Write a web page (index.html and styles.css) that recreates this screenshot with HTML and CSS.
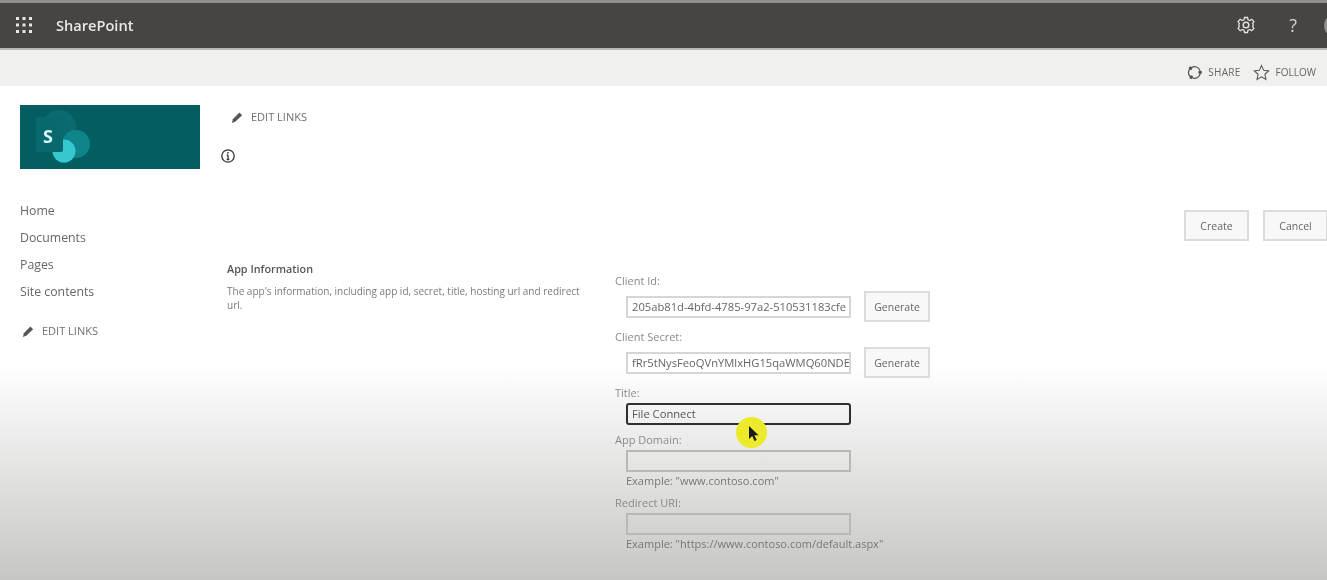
FILE: index.html
```html
<!DOCTYPE html>
<html lang="en">
<head>
<meta charset="utf-8">
<title>SharePoint</title>
<link rel="stylesheet" href="styles.css">
</head>
<body>
<div class="page">
  <header class="suitebar">
    <svg class="waffle" viewBox="0 0 16 16" width="16" height="16"><g fill="#e6e6e4"><rect x="0" y="0" width="3" height="3"/><rect x="6.500" y="0" width="3" height="3"/><rect x="13" y="0" width="3" height="3"/><rect x="0" y="6.500" width="3" height="3"/><rect x="6.500" y="6.500" width="3" height="3"/><rect x="13" y="6.500" width="3" height="3"/><rect x="0" y="13" width="3" height="3"/><rect x="6.500" y="13" width="3" height="3"/><rect x="13" y="13" width="3" height="3"/></g></svg>
    <span class="brand">SharePoint</span>
    <div class="suite-actions">
      <svg class="gear" viewBox="0 0 24 24" width="20" height="20" fill="none" stroke="#e4e4e2" stroke-width="1.700"><circle cx="12" cy="12" r="3.400"/><path d="M10 2h4l.7 3 2.300 1 2.700-1.600 2.800 2.900L20.900 10l.6 1 0 2-.6 1 1.600 2.700-2.800 2.900L17 18l-2.300 1-.7 3h-4l-.7-3L7 18l-2.700 1.600-2.800-2.900L3.100 14l-.6-1v-2l.6-1L1.500 7.300l2.800-2.900L7 6l2.300-1z" transform="translate(1.200 1.200) scale(.9)"/></svg>
      <span class="help">?</span>
    </div>
    <span class="avatar-edge"></span>
  </header>
  <div class="ribbon">
    <span class="ribbon-action">
      <svg viewBox="0 0 16 16" width="15" height="15" fill="none" stroke="#555" stroke-width="1.300"><path d="M5 2.600A6 6 0 0 1 13.800 6M14 9.500A6 6 0 0 1 6.500 14M3 12A6 6 0 0 1 2.600 5"/><circle cx="3.800" cy="3.500" r="1.300" fill="#555"/><circle cx="14" cy="7.800" r="1.300" fill="#555"/><circle cx="4.500" cy="13" r="1.300" fill="#555"/></svg>
      <span class="share-label">SHARE</span>
    </span>
    <span class="ribbon-action">
      <svg viewBox="0 0 16 16" width="17" height="17" fill="none" stroke="#555" stroke-width="1"><path d="M8 1.500l2 4.500 4.800.5-3.600 3.200 1 4.800L8 12.100l-4.200 2.400 1-4.800L1.200 6.500 6 6z"/></svg>
      FOLLOW
    </span>
  </div>
  <div class="layout">
    <aside class="sidenav">
      <div class="logo">
        <svg viewBox="0 0 64 64" width="64" height="64">
          <circle cx="21" cy="22" r="17" fill="#0a6a70"/>
          <circle cx="38" cy="39" r="14" fill="#0f8489"/>
          <circle cx="26" cy="46" r="11.500" fill="#35c9cf"/>
          <rect x="-2" y="12" width="27" height="35" rx="2" fill="#07686d"/>
          <text x="5" y="38" class="logo-s">S</text>
        </svg>
      </div>
      <nav class="nav-links">
        <a>Home</a>
        <a>Documents</a>
        <a>Pages</a>
        <a>Site contents</a>
      </nav>
      <div class="edit-links nav-edit">
        <svg viewBox="0 0 14 14" width="13" height="13"><path d="M1 13l1-4 7-7.500 3 3-7.500 7z" fill="#555"/></svg>
        EDIT LINKS
      </div>
    </aside>
    <main class="content">
      <div class="edit-links top-edit">
        <svg viewBox="0 0 14 14" width="13" height="13"><path d="M1 13l1-4 7-7.500 3 3-7.500 7z" fill="#555"/></svg>
        EDIT LINKS
      </div>
      <svg class="info" viewBox="0 0 16 16" width="16" height="16" fill="none" stroke="#333" stroke-width="1.300"><circle cx="8" cy="8" r="6.200"/><path d="M8 7v4.500M6.700 11.500h2.600M6.800 7H8" /><circle cx="8" cy="4.800" r=".9" fill="#333" stroke="none"/></svg>
      <div class="actions">
        <button class="btn" type="button">Create</button>
        <button class="btn" type="button">Cancel</button>
      </div>
      <section class="app-section">
        <div class="app-desc">
          <h2>App Information</h2>
          <p>The app's information, including app id, secret, title, hosting url and redirect url.</p>
        </div>
        <div class="form">
          <label class="field-label">Client Id:</label>
          <div class="field-row">
            <div class="input"><span>205ab81d-4bfd-4785-97a2-510531183cfe</span></div>
            <button class="btn gen" type="button">Generate</button>
          </div>
          <label class="field-label">Client Secret:</label>
          <div class="field-row">
            <div class="input"><span>fRr5tNysFeoQVnYMlxHG15qaWMQ60NDE</span></div>
            <button class="btn gen" type="button">Generate</button>
          </div>
          <label class="field-label title-label">Title:</label>
          <div class="input focused"><span>File Connect</span></div>
          <label class="field-label domain-label">App Domain:</label>
          <div class="input empty"></div>
          <div class="hint">Example: "www.contoso.com"</div>
          <label class="field-label uri-label">Redirect URI:</label>
          <div class="input empty"></div>
          <div class="hint">Example: "https://www.contoso.com/default.aspx"</div>
        </div>
      </section>
    </main>
  </div>
  <div class="cursor">
    <svg viewBox="0 0 12 18" width="12" height="18"><path d="M1 1v13l3.200-3 2.300 5 2.200-1-2.300-4.800H10.500z" fill="#1a1a1a"/></svg>
  </div>
</div>
</body>
</html>
```

FILE: styles.css
```css
* { box-sizing: border-box; }
html, body { margin: 0; height: 100%; overflow: hidden; background: #fff; }
.page {
  position: relative;
  width: 1327px;
  height: 580px;
  overflow: hidden;
  font-family: "Open Sans", "Liberation Sans", sans-serif;
  color: #666;
  background: linear-gradient(to bottom, #fff 0, #fff 365px, #c6c6c4 580px);
  filter: blur(0.6px);
}
.suitebar {
  height: 50px;
  display: flex;
  align-items: center;
  background: #474543;
  border-top: 3px solid #8f8e8c;
  border-bottom: 2px solid #b9b8b6;
  padding: 0 0 2px 16px;
}
.waffle { flex: none; }
.brand {
  margin-left: 24px;
  color: #e8e8e6;
  font-size: 14.600px;
  font-weight: 600;
}
.suite-actions {
  margin-left: auto;
  display: flex;
  align-items: center;
  gap: 33px;
  padding-right: 30px;
}
.help { color: #d4d4d2; font-size: 18px; line-height: 20px; }
.avatar-edge {
  position: absolute;
  right: -8px;
  top: 17px;
  width: 11px;
  height: 17px;
  border-radius: 50%;
  background: #8f8e8c;
}
.ribbon {
  height: 36px;
  background: #f0f0ef;
  display: flex;
  align-items: center;
  justify-content: flex-end;
  gap: 12px;
  padding: 8px 11px 0 0;
  font-size: 10px;
  color: #666;
}
.ribbon-action { display: flex; align-items: center; gap: 6px; }
.share-label { letter-spacing: 0.3px; }
.layout { display: flex; }
.sidenav { flex: none; width: 220px; padding: 19px 0 0 20px; }
.logo {
  width: 180px;
  height: 64px;
  background: #045d61;
  padding-left: 18px;
}
.logo svg { display: block; overflow: visible; }
.logo-s { font-size: 18px; font-weight: 700; fill: #d9fbfb; font-family: "Open Sans", sans-serif; }
.nav-links {
  display: flex;
  flex-direction: column;
  gap: 9px;
  margin-top: 33px;
  font-size: 12.300px;
  line-height: 18px;
  color: #666;
}
.edit-links {
  display: flex;
  align-items: center;
  gap: 7px;
  font-size: 11px;
  line-height: 16px;
  color: #707070;
}
.nav-edit { margin-top: 22px; padding-left: 2px; }
.content { flex: 1; min-width: 0; padding-top: 23px; }
.top-edit { padding-left: 11px; }
.info { display: block; margin: 23px 0 0 0; }
.actions {
  display: flex;
  justify-content: flex-end;
  gap: 14px;
  margin: 46px -1px 0 0;
}
.btn {
  width: 65px;
  height: 31px;
  padding: 0;
  background: #f8f8f8;
  border: 2px solid #dcdcdc;
  font: inherit;
  font-size: 10.500px;
  color: #666;
}
.app-section { display: flex; margin-top: 12px; padding-left: 6px; }
.app-desc { width: 389px; flex: none; padding: 8px 0 0 1px; }
.app-desc h2 {
  margin: 0;
  font-size: 10.800px;
  font-weight: 600;
  line-height: 16px;
  color: #555;
}
.app-desc p {
  margin: 7px 0 0;
  width: 362px;
  font-size: 10px;
  line-height: 14px;
  color: #7a7a7a;
}
.form { flex: none; padding-top: 20px; }
.field-label {
  display: block;
  font-size: 11px;
  line-height: 16px;
  color: #8a8a8a;
}
.field-row {
  display: flex;
  align-items: center;
  gap: 13px;
  margin: 2px 0 0 11px;
  height: 31px;
}
.field-row + .field-label { margin-top: 7px; }
.input {
  width: 225px;
  height: 22px;
  border: 2px solid #d6d6d6;
  background: #fff;
  padding: 0 4px;
  font-size: 11.200px;
  line-height: 18px;
  color: #666;
  overflow: hidden;
  white-space: nowrap;
}
.form > .input { margin-left: 11px; }
.focused { background: transparent; border-color: #2f2f2f; border-radius: 3px; margin-top: 2px; color: #555; }
.empty { background: transparent; border-color: #b8b8b6; margin-top: 2px; }
.domain-label { margin-top: 7px; }
.uri-label { margin-top: 6px; }
.gen { width: 66px; height: 31px; }
.hint {
  margin: 1px 0 0 11px;
  font-size: 11px;
  line-height: 16px;
  color: #777;
}
.cursor {
  position: absolute;
  left: 736px;
  top: 417px;
  width: 31px;
  height: 31px;
  border-radius: 50%;
  background: #ecea2a;
  padding: 8px 0 0 12px;
}
.cursor svg { display: block; }
```
